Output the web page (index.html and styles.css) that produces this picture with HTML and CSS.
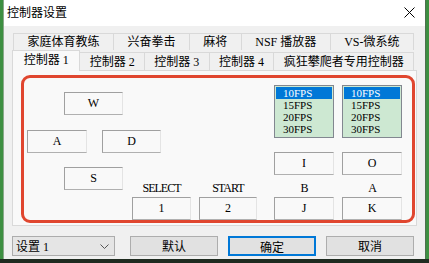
FILE: index.html
```html
<!DOCTYPE html>
<html lang="zh-CN">
<head>
    <meta charset="UTF-8">
    <title>控制器设置</title>
    <link rel="stylesheet" href="styles.css">
</head>
<body>
    <div class="window">
        <div class="titlebar">
            <span class="title">控制器设置</span>
            <svg class="close" width="11" height="11" viewBox="0 0 11 11">
                <path d="M0.5 0.5 L10.5 10.5 M10.5 0.5 L0.5 10.5" stroke="#000" stroke-width="1" fill="none"/>
            </svg>
        </div>
        <div class="body">
            <div class="tabs">
                <div class="tab-row back">
                    <div class="tab">家庭体育教练</div>
                    <div class="tab">兴奋拳击</div>
                    <div class="tab">麻将</div>
                    <div class="tab">NSF 播放器</div>
                    <div class="tab">VS-微系统</div>
                </div>
                <div class="tab-row front">
                    <div class="tab active">控制器 1</div>
                    <div class="tab">控制器 2</div>
                    <div class="tab">控制器 3</div>
                    <div class="tab">控制器 4</div>
                    <div class="tab">疯狂攀爬者专用控制器</div>
                </div>
            </div>
            <div class="panel">
                <div class="highlight">
                    <div class="pad">
                        <div class="key up">W</div>
                        <div class="key left">A</div>
                        <div class="key right">D</div>
                        <div class="key down">S</div>
                        <div class="caption select">SELECT</div>
                        <div class="key select">1</div>
                        <div class="caption start">START</div>
                        <div class="key start">2</div>
                    </div>
                    <div class="turbo">
                        <div class="turbo-col">
                            <div class="listbox">
                                <div class="item selected">10FPS</div>
                                <div class="item">15FPS</div>
                                <div class="item">20FPS</div>
                                <div class="item">30FPS</div>
                            </div>
                            <div class="key turbo-key">I</div>
                            <div class="caption">B</div>
                            <div class="key">J</div>
                        </div>
                        <div class="turbo-col">
                            <div class="listbox">
                                <div class="item selected">10FPS</div>
                                <div class="item">15FPS</div>
                                <div class="item">20FPS</div>
                                <div class="item">30FPS</div>
                            </div>
                            <div class="key turbo-key">O</div>
                            <div class="caption">A</div>
                            <div class="key">K</div>
                        </div>
                    </div>
                </div>
            </div>
            <div class="footer">
                <div class="combo">
                    <span>设置 1</span>
                    <svg width="9" height="5" viewBox="0 0 9 5">
                        <path d="M0.5 0.5 L4.5 4.5 L8.5 0.5" stroke="#555" stroke-width="1" fill="none"/>
                    </svg>
                </div>
                <div class="buttons">
                    <button class="btn">默认</button>
                    <button class="btn default">确定</button>
                    <button class="btn">取消</button>
                </div>
            </div>
        </div>
    </div>
</body>
</html>
```

FILE: styles.css
```css
body {
    margin: 0;
    height: 263px;
    background: linear-gradient(#3d8f41 0, #3d8f41 259px, #1f2b20 259px);
    font-family: "Liberation Serif", "Noto Sans CJK SC", serif;
    font-size: 12px;
    color: #000;
    overflow: hidden;
}
.window {
    margin-left: 3px;
    width: 423px;
    height: 259px;
    box-sizing: border-box;
    border-left: 1px solid #8aa88a;
    border-right: 1px solid #4f6f50;
    background-color: #f0f0f0;
    display: flex;
    flex-direction: column;
}
.titlebar {
    height: 26px;
    background-color: #fff;
    display: flex;
    align-items: center;
    justify-content: space-between;
    padding: 0 10px 0 3px;
}
.title {
    line-height: 14px;
    margin-top: -1px;
}
.close {
    margin-top: -1px;
}
.body {
    flex: 1;
    display: flex;
    flex-direction: column;
}
.tabs {
    margin: 7px 8px 0 8px;
}
.tab-row {
    display: flex;
}
.tab {
    flex: 1 1 auto;
    padding: 0 6px;
    text-align: center;
    white-space: nowrap;
    background-color: #f0f0f0;
    border: 1px solid #d9d9d9;
    border-bottom: none;
    margin-left: -1px;
    box-sizing: border-box;
}
.back {
    margin: 0 3px 0 2px;
}
.back .tab {
    height: 17px;
    line-height: 17px;
}
.front {
    margin-right: 3px;
    align-items: flex-end;
}
.front .tab {
    height: 18px;
    line-height: 18px;
}
.front .tab.active {
    height: 21px;
    line-height: 19px;
    background-color: #f9f9f9;
    margin-left: 0;
    margin-bottom: -1px;
    position: relative;
    z-index: 1;
    flex-grow: 1.4;
}
.panel {
    margin: 0 8px 0 8px;
    height: 156px;
    box-sizing: border-box;
    border: 1px solid #d9d9d9;
    background-color: #f9f9f9;
}
.highlight {
    margin: 4px 0 0 8px;
    width: 394px;
    height: 148px;
    box-sizing: border-box;
    border: 3px solid #e0462f;
    border-radius: 9px;
    overflow: hidden;
    display: flex;
    align-items: flex-start;
    padding-left: 3px;
}
.key {
    height: 23px;
    box-sizing: border-box;
    border: 1px solid;
    border-color: #a0a0a0 #e4e4e4 #b0b0b0 #a0a0a0;
    display: flex;
    align-items: center;
    justify-content: center;
}
.caption {
    height: 12px;
    line-height: 12px;
    text-align: center;
    letter-spacing: -1px;
}
.pad {
    margin-top: 14px;
    display: grid;
    grid-template-columns: 37px 23px 15px 21px 9px 29px 30px 8px 58px;
    grid-template-rows: 23px 15px 23px 14px 23px 7px 23px;
}
.up { grid-column: 2 / 5; grid-row: 1; }
.left { grid-column: 1 / 3; grid-row: 3; }
.right { grid-column: 4 / 7; grid-row: 3; }
.down { grid-column: 2 / 5; grid-row: 5; }
.caption.select { grid-column: 6 / 8; grid-row: 5 / 7; align-self: end; margin-bottom: 3px; }
.key.select { grid-column: 6 / 8; grid-row: 7; }
.caption.start { grid-column: 9; grid-row: 5 / 7; align-self: end; margin-bottom: 3px; }
.key.start { grid-column: 9; grid-row: 7; }
.turbo {
    margin: 7px 0 0 17px;
    display: flex;
    gap: 8px;
}
.turbo-col {
    width: 60px;
    display: flex;
    flex-direction: column;
}
.listbox {
    height: 53px;
    box-sizing: border-box;
    border: 1px solid #828790;
    background-color: #cde8d2;
    padding: 1px;
}
.item {
    height: 12px;
    line-height: 12px;
    font-size: 11px;
    padding-left: 7px;
}
.item.selected {
    background-color: #0078d7;
    color: #fff;
}
.turbo-key {
    margin: 14px 0 7px;
}
.turbo-col .caption {
    margin-bottom: 3px;
}
.footer {
    margin: 10px 11px 0 8px;
    height: 20px;
    display: flex;
    justify-content: space-between;
}
.combo {
    width: 103px;
    box-sizing: border-box;
    border: 1px solid #acacac;
    background-color: #e5e5e5;
    display: flex;
    align-items: center;
    justify-content: space-between;
    padding: 0 5px 0 3px;
}
.buttons {
    display: flex;
    gap: 10px;
}
.btn {
    width: 88px;
    height: 20px;
    box-sizing: border-box;
    border: 1px solid #adadad;
    background-color: #e1e1e1;
    font-family: inherit;
    font-size: 12px;
    padding: 0;
    color: #000;
}
.btn.default {
    border: 2px solid #0078d7;
}
```
